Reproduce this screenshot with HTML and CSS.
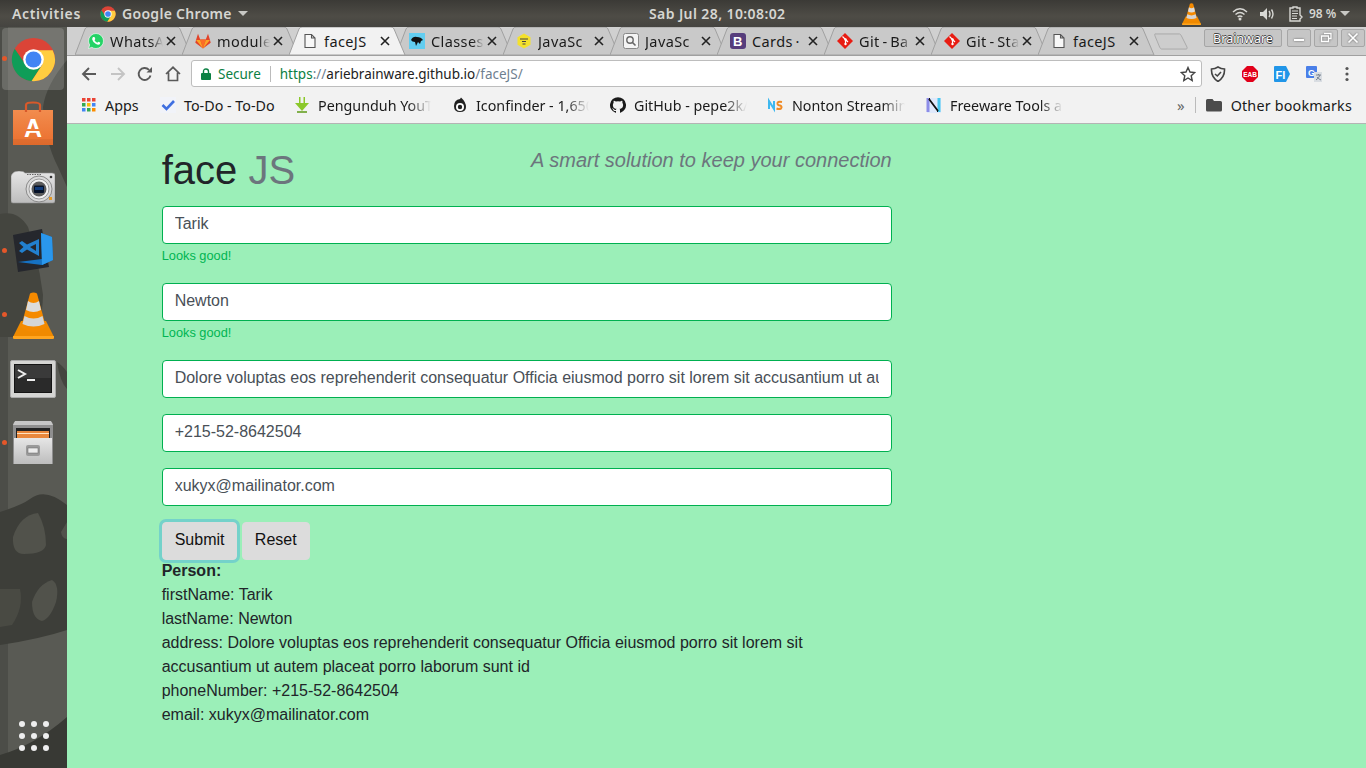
FILE: index.html
```html
<!DOCTYPE html>
<html lang="en">
<head>
<meta charset="utf-8">
<title>faceJS</title>
<link rel="stylesheet" href="styles.css">
</head>
<body>
<svg class="defs" width="0" height="0" aria-hidden="true">
  <defs>
    <symbol id="tabshape-in" viewBox="0 0 119 28"><path d="M0 28 L10 2 Q11 0 13 0 H102 Q104 0 105 2 L116 28 Z" fill="#c9c9c9" stroke="#a0a0a0"/></symbol>
    <symbol id="tabshape-on" viewBox="0 0 119 28"><path d="M0 28 L10 2 Q11 0 13 0 H102 Q104 0 105 2 L116 28 Z" fill="#f2f2f2" stroke="#a0a0a0"/></symbol>
    <symbol id="doc" viewBox="0 0 16 16"><path d="M3 1.500 H9.500 L13 5 V14.500 H3 Z M9.500 1.500 V5 H13" fill="#f8f8f8" stroke="#555" stroke-width="1.100"/></symbol>
    <symbol id="git" viewBox="0 0 16 16"><path d="M8 0 L16 8 L8 16 L0 8 Z" fill="#e81c12"/><path d="M5.500 3.500 L8.500 6.500 V11 M8.500 6.500 L11 9" stroke="#fff" stroke-width="1.200" fill="none"/><circle cx="8.500" cy="6.500" r="1.200" fill="#fff"/><circle cx="8.500" cy="11" r="1.200" fill="#fff"/></symbol>
    <symbol id="x" viewBox="0 0 10 10"><path d="M1 1 L9 9 M9 1 L1 9" stroke="#222" stroke-width="1.600"/></symbol>
    <linearGradient id="silver" x1="0" y1="0" x2="0" y2="1"><stop offset="0" stop-color="#e6e6e6"/><stop offset="1" stop-color="#bdbdbd"/></linearGradient>
    <linearGradient id="bag" x1="0" y1="0" x2="0" y2="1"><stop offset="0" stop-color="#f28c4e"/><stop offset="1" stop-color="#ea6f2e"/></linearGradient>
    <symbol id="cone" viewBox="0 0 41 47">
      <path d="M8 29 L0 45 Q0 47 2 47 H39 Q41 47 41 45 L33 29 Z" fill="#f08a00"/>
      <path d="M0 44 H41 V46 Q41 47 39 47 H2 Q0 47 0 46 Z" fill="#ffa51f"/>
      <path d="M17 1.500 Q20.500 -.5 24 1.500 L33 35 Q20.500 45 8 35 Z" fill="#f58a00"/>
      <path d="M15 9 Q20.500 13 26 9 L28 18 Q20.500 22 13 18 Z" fill="#dcdcdc"/>
      <path d="M11.500 24 Q20.500 29 29.500 24 L31.500 32 Q20.500 37 9.500 32 Z" fill="#d5d5d5"/>
    </symbol>
  </defs>
</svg>

<header class="topbar">
  <div class="top-left">
    <span class="activities">Activities</span>
    <svg class="top-chrome" viewBox="0 0 48 48"><circle cx="24" cy="24" r="23" fill="#db4437"/><path d="M4 12.500 A23 23 0 0 0 22 47 L33 30 H16 Z" fill="#0f9d58"/><path d="M24 14 H44.500 A23 23 0 0 1 22 47 L33 30 Z" fill="#ffcd40"/><circle cx="24" cy="24" r="11" fill="#fff"/><circle cx="24" cy="24" r="8.500" fill="#4285f4"/></svg>
    <span class="appname">Google Chrome</span>
    <span class="caret"></span>
  </div>
  <time class="clock">Sab Jul 28, 10:08:02</time>
  <div class="top-right">
    <svg class="tray-cone"><use href="#cone"/></svg>
    <svg class="tray-wifi" viewBox="0 0 16 14"><path d="M1 5 Q8 -1.500 15 5 M3.500 7.500 Q8 3.500 12.500 7.500 M5.700 9.800 Q8 8 10.300 9.800" stroke="#d8d8d4" stroke-width="1.500" fill="none"/><circle cx="8" cy="12" r="1.500" fill="#d8d8d4"/></svg>
    <svg class="tray-sound" viewBox="0 0 16 14"><path d="M1 5 H4 L8 1 V13 L4 9 H1 Z" fill="#d8d8d4"/><path d="M10 4 Q12 7 10 10 M12.500 2.500 Q15.500 7 12.500 11.500" stroke="#d8d8d4" stroke-width="1.400" fill="none"/></svg>
    <svg class="tray-batt" viewBox="0 0 14 16"><path d="M1 2 H4 V1 H8 V2 H11 V9 L13 11 L11 13 V15 H1 Z" fill="none" stroke="#d8d8d4" stroke-width="1.400"/><path d="M3 5 H9 M3 7.500 H9 M3 10 H8 M3 12.500 H8" stroke="#d8d8d4" stroke-width="1.100"/></svg>
    <span class="batt-text">98 %</span>
    <span class="caret"></span>
  </div>
</header>

<div class="desktop">
  <aside class="dock">
    <svg class="wallpaper" viewBox="0 0 67 741" preserveAspectRatio="none" aria-hidden="true">
      <rect width="67" height="741" fill="#595a54"/>
      <rect width="8" height="741" fill="#000" opacity=".14"/>
      <path d="M67 33 Q46 58 43 80 Q45 115 58 140 L67 160 Z" fill="#44453f"/>
      <path d="M0 187 Q18 183 28 200 Q38 230 43 268 Q42 300 33 310 L0 310 Z" fill="#44453f"/>
      <path d="M57 335 Q62 338 67 345 V362 Q60 355 57 335 Z" fill="#44453f"/>
      <path d="M0 485 Q22 478 30 472 Q45 460 67 478 V603 Q40 612 0 618 Z" fill="#3d3e39"/>
      <path d="M13 510 Q20 488 38 486 Q46 500 46 518 Q44 527 24 527 Q12 527 13 510 Z" fill="#51524b"/>
      <path d="M32 575 Q38 557 52 553 Q60 558 56 575 Q50 592 42 594 Q32 592 32 575 Z" fill="#51524b"/>
      <path d="M0 562 H20 Q24 580 12 598 L0 600 Z" fill="#494a43"/>
      <path d="M61 505 Q67 495 67 495 V512 Q62 512 61 505 Z" fill="#51524b"/>
      <path d="M0 741 V728 Q35 718 67 690 V741 Z" fill="#383934"/>
    </svg>
    <div class="dock-item dock-active"><span class="run-dot"></span>
      <svg class="ic-chrome" viewBox="0 0 48 48"><circle cx="24" cy="24" r="23" fill="#db4437"/><path d="M4 12.500 A23 23 0 0 0 22 47 L33 30 H16 Z" fill="#0f9d58"/><path d="M24 14 H44.500 A23 23 0 0 1 22 47 L33 30 Z" fill="#ffcd40"/><circle cx="24" cy="24" r="11" fill="#fff"/><circle cx="24" cy="24" r="8.500" fill="#4285f4"/></svg>
    </div>
    <div class="dock-item">
      <svg class="ic-store" viewBox="0 0 42 44"><path d="M1 9 H41 V44 H1 Z" fill="url(#bag)"/><path d="M14 11 V4 Q14 1.500 21 1.500 Q28 1.500 28 4 V11" fill="none" stroke="#d9592a" stroke-width="2.200"/><text x="21" y="36" class="store-a">A</text><rect x="12" y="28" width="18" height="2" fill="#ee7d3b"/><rect x="1" y="38" width="40" height="6" fill="#000" opacity=".05"/></svg>
    </div>
    <div class="dock-item">
      <svg class="ic-camera" viewBox="0 0 44 33"><path d="M1 3 Q3 0 8 0 Q13 0 14 2 H41 Q44 2 44 4 V30 Q44 32 42 32 H2 Q0 32 0 30 V5 Z" fill="url(#silver)" stroke="#8f8f8f" stroke-width=".6"/><path d="M16 3.500 H30" stroke="#666" stroke-dasharray="1.500 1"/><circle cx="28" cy="18" r="13" fill="#d9d9d9" stroke="#8a8a8a"/><circle cx="28" cy="18" r="10" fill="#f2f2f2" stroke="#9a9a9a"/><circle cx="28" cy="18" r="7.500" fill="#5a5a5a"/><rect x="23" y="14.500" width="10" height="7.500" rx="1" fill="#061228"/><rect x="24" y="16" width="8" height="3" fill="#103a78"/><rect x="38" y="26" width="3" height="3" fill="#e59a24"/><circle cx="40" cy="6" r="1.300" fill="#333"/></svg>
    </div>
    <div class="dock-item"><span class="run-dot"></span>
      <svg class="ic-code" viewBox="0 0 42 44"><path d="M1 6 L30 0 L37 38 L6 43 Z" fill="#25272d"/><path d="M29 4 L40 8 L41 31 L30 36 L6 33 L30 30 Z" fill="#1672c4"/><path d="M29 4 L40 8 L41 31 L30 36 Z" fill="#2a97ec"/><path d="M27 10 V27 L15 20.500 L10 24 L7 22 L11.500 18 L7 14 L10 12 L15 15.500 Z M24 15 L18 18 L24 22 Z" fill="#2280cf" fill-rule="evenodd"/></svg>
    </div>
    <div class="dock-item"><span class="run-dot"></span>
      <svg class="ic-cone"><use href="#cone"/></svg>
    </div>
    <div class="dock-item">
      <svg class="ic-term" viewBox="0 0 46 38"><rect x=".5" y=".5" width="45" height="37" rx="1.500" fill="#d5d5d3" stroke="#aaa"/><rect x="4" y="4" width="38" height="29" fill="#141414"/><rect x="5" y="5" width="36" height="13" fill="#3a3a3a"/><rect x="5" y="18" width="36" height="14" fill="#2a2a2a"/><path d="M8 10 L15 14 L8 18" stroke="#eee" stroke-width="2" fill="none"/><path d="M17 20 H25" stroke="#eee" stroke-width="2"/></svg>
    </div>
    <div class="dock-item"><span class="run-dot"></span>
      <svg class="ic-files" viewBox="0 0 42 44"><path d="M2 1 H40 L41 4 V43 H1 V4 Z" fill="#8f8f8f"/><path d="M3 0 H39 L41 4 H1 Z" fill="#c6c6c6"/><rect x="4" y="7" width="34" height="11" fill="#222"/><rect x="5" y="10" width="32" height="7" fill="#e8873c"/><path d="M5 12.500 H37" stroke="#ffe3c2"/><path d="M2 17 H40 V43 H2 Z" fill="url(#silver)"/><rect x="14" y="24" width="14" height="11" rx="2" fill="#9a9a9a"/><rect x="16" y="27" width="10" height="5" fill="#ececec" stroke="#666" stroke-width=".5"/></svg>
    </div>
    <div class="dock-grid">
      <i></i><i></i><i></i><i></i><i></i><i></i><i></i><i></i><i></i>
    </div>
  </aside>

  <div class="browser">
    <div class="tabstrip">
      <div class="tab">
        <svg class="tab-bg"><use href="#tabshape-in"/></svg>
        <svg class="fav" viewBox="0 0 16 16"><path d="M8 .5 A7.500 7.500 0 0 1 8 15.500 Q5.500 15.500 3.800 14.300 L.5 15.500 L1.700 12 Q.5 10 .5 8 A7.500 7.500 0 0 1 8 .5 Z" fill="#25d366" stroke="#fff" stroke-width=".6"/><path d="M5 4 L6.500 4 L7.300 6 L6.500 7.200 Q7.500 9 9.300 9.700 L10.300 8.700 L12.200 9.600 L12 11 Q10.500 12.300 8 11 Q5 9.500 4.200 6.500 Q4 5 5 4 Z" fill="#fff"/></svg>
        <span class="tab-label">WhatsA</span>
        <svg class="tab-x"><use href="#x"/></svg>
      </div>
      <div class="tab">
        <svg class="tab-bg"><use href="#tabshape-in"/></svg>
        <svg class="fav" viewBox="0 0 16 16"><path d="M8 15.500 L.3 9.800 L1 7 L3 .8 L5.200 6.500 H10.800 L13 .8 L15 7 L15.700 9.800 Z" fill="#e24329"/><path d="M8 15.500 L5.200 6.500 H10.800 Z" fill="#fc6d26"/><path d="M8 15.500 L1 7 H5.200 Z M8 15.500 L15 7 H10.800 Z" fill="#fca326"/></svg>
        <span class="tab-label">module</span>
        <svg class="tab-x"><use href="#x"/></svg>
      </div>
      <div class="tab tab-active">
        <svg class="tab-bg"><use href="#tabshape-on"/></svg>
        <svg class="fav"><use href="#doc"/></svg>
        <span class="tab-label tab-label-full">faceJS</span>
        <svg class="tab-x"><use href="#x"/></svg>
      </div>
      <div class="tab">
        <svg class="tab-bg"><use href="#tabshape-in"/></svg>
        <svg class="fav" viewBox="0 0 16 16"><rect width="16" height="16" fill="#62cdf0"/><path d="M2 7 Q4 3 8 4 Q12 4 14 7 L12 8 L11 11 L9 9 L7 13 L6 9 Q3 9 2 7 Z" fill="#111"/></svg>
        <span class="tab-label">Classes</span>
        <svg class="tab-x"><use href="#x"/></svg>
      </div>
      <div class="tab">
        <svg class="tab-bg"><use href="#tabshape-in"/></svg>
        <svg class="fav" viewBox="0 0 16 16"><path d="M8 .5 L14.500 4.200 V11.800 L8 15.500 L1.500 11.800 V4.200 Z" fill="#f4e12c"/><path d="M4 6 H12 M6 8.500 H10 M6.500 11 H9.500" stroke="#444" stroke-width="1.200"/></svg>
        <span class="tab-label">JavaSc</span>
        <svg class="tab-x"><use href="#x"/></svg>
      </div>
      <div class="tab">
        <svg class="tab-bg"><use href="#tabshape-in"/></svg>
        <svg class="fav" viewBox="0 0 16 16"><rect x=".5" y=".5" width="15" height="15" rx="2" fill="#f4f4f4" stroke="#888"/><circle cx="7" cy="7" r="3.200" fill="none" stroke="#666" stroke-width="1.400"/><path d="M9.500 9.500 L12.500 12.500" stroke="#666" stroke-width="1.600"/></svg>
        <span class="tab-label">JavaSc</span>
        <svg class="tab-x"><use href="#x"/></svg>
      </div>
      <div class="tab">
        <svg class="tab-bg"><use href="#tabshape-in"/></svg>
        <svg class="fav" viewBox="0 0 16 16"><rect width="16" height="16" rx="3" fill="#563d7c"/><text x="8" y="13" class="fav-b">B</text></svg>
        <span class="tab-label tab-label-full">Cards ·</span>
        <svg class="tab-x"><use href="#x"/></svg>
      </div>
      <div class="tab">
        <svg class="tab-bg"><use href="#tabshape-in"/></svg>
        <svg class="fav"><use href="#git"/></svg>
        <span class="tab-label">Git - Ba</span>
        <svg class="tab-x"><use href="#x"/></svg>
      </div>
      <div class="tab">
        <svg class="tab-bg"><use href="#tabshape-in"/></svg>
        <svg class="fav"><use href="#git"/></svg>
        <span class="tab-label">Git - Sta</span>
        <svg class="tab-x"><use href="#x"/></svg>
      </div>
      <div class="tab">
        <svg class="tab-bg"><use href="#tabshape-in"/></svg>
        <svg class="fav"><use href="#doc"/></svg>
        <span class="tab-label tab-label-full">faceJS</span>
        <svg class="tab-x"><use href="#x"/></svg>
      </div>
      <svg class="newtab" viewBox="0 0 36 18"><path d="M1 1 H27 Q28 1 29 3 L35 15 Q35.500 17 34 17 H8 Q7 17 6 15 L1 3 Q.5 1 1 1 Z" fill="#cdcdcd" stroke="#a8a8a8"/></svg>
      <div class="winctl">
        <span class="win-name">Brainware</span>
        <span class="win-btn"><svg viewBox="0 0 12 12"><path d="M1 8 H11" stroke="#fff" stroke-width="2"/></svg></span>
        <span class="win-btn"><svg viewBox="0 0 12 12"><path d="M4 1.500 H11 V6.500 H9 M1.500 4 H8.500 V9.500 H1.500 Z" fill="none" stroke="#fff" stroke-width="1.300"/></svg></span>
        <span class="win-btn win-close"><svg viewBox="0 0 12 12"><path d="M1.500 1.500 L10.500 10.500 M10.500 1.500 L1.500 10.500" stroke="#fff" stroke-width="1.700"/></svg></span>
      </div>
    </div>

    <div class="toolbar">
      <svg class="tb tb-back" viewBox="0 0 16 16"><path d="M15 8 H2.500 M8 2 L2 8 L8 14" stroke="#5a5a5a" stroke-width="1.900" fill="none"/></svg>
      <svg class="tb tb-fwd" viewBox="0 0 16 16"><path d="M1 8 H13.500 M8 2 L14 8 L8 14" stroke="#c4c4c4" stroke-width="1.900" fill="none"/></svg>
      <svg class="tb tb-reload" viewBox="0 0 16 16"><path d="M13.500 9.500 A6 6 0 1 1 12 3.800" stroke="#5a5a5a" stroke-width="1.900" fill="none"/><path d="M9.500 6.500 H15 V1 Z" fill="#5a5a5a"/></svg>
      <svg class="tb tb-home" viewBox="0 0 16 16"><path d="M1 8 L8 1.300 L15 8 M3.500 6.500 V14.500 H12.500 V6.500" stroke="#5a5a5a" stroke-width="1.700" fill="none"/></svg>
      <div class="omnibox">
        <svg class="lock" viewBox="0 0 10 12"><path d="M2.500 5 V3.500 Q2.500 1 5 1 Q7.500 1 7.500 3.500 V5" fill="none" stroke="#0b8043" stroke-width="1.400"/><rect y="5" width="10" height="7" rx="1" fill="#0b8043"/></svg>
        <span class="secure">Secure</span>
        <span class="omni-sep"></span>
        <span class="url"><span class="url-https">https</span><span class="url-mute">://</span>ariebrainware.github.io<span class="url-mute">/faceJS/</span></span>
        <svg class="star" viewBox="0 0 16 16"><path d="M8 1.500 L10 6 L14.800 6.500 L11.200 9.700 L12.200 14.500 L8 12 L3.800 14.500 L4.800 9.700 L1.200 6.500 L6 6 Z" fill="none" stroke="#444" stroke-width="1.400"/></svg>
      </div>
      <div class="exts">
        <svg viewBox="0 0 16 16"><path d="M8 1 Q11 3 14.500 3 Q15 11 8 15.500 Q1 11 1.500 3 Q5 3 8 1 Z" fill="none" stroke="#444" stroke-width="1.600"/><path d="M5 8 L7.300 10 L11 6" stroke="#444" stroke-width="1.600" fill="none"/></svg>
        <svg viewBox="0 0 16 16"><path d="M5 0 H11 L16 5 V11 L11 16 H5 L0 11 V5 Z" fill="#e2001a"/><text x="8" y="10.500" class="ext-eab">EAB</text></svg>
        <svg viewBox="0 0 16 16"><path d="M1 0 H12 L16 8 L12 16 H1 Q0 16 0 15 V1 Q0 0 1 0 Z" fill="#2196e8"/><text x="6.500" y="12.500" class="ext-fi">FI</text></svg>
        <svg viewBox="0 0 16 16"><rect width="11" height="12" rx="1" fill="#4a7fe8"/><text x="5.500" y="9.500" class="ext-g">G</text><path d="M8 6 H16 V16 H8 Z" fill="#d9dde2"/><path d="M10 9 H15 M12.500 8 V9 M14 9 Q13 12 10 14 M11 11 Q12.500 13 15 14" stroke="#7a8492" stroke-width="1" fill="none"/></svg>
        <svg class="ext-menu" viewBox="0 0 4 16"><circle cx="2" cy="2.500" r="1.600" fill="#555"/><circle cx="2" cy="8" r="1.600" fill="#555"/><circle cx="2" cy="13.500" r="1.600" fill="#555"/></svg>
      </div>
    </div>

    <nav class="bookmarks">
      <div class="bm bm-apps">
        <svg class="bm-ic" viewBox="0 0 14 14"><rect width="3.500" height="3.500" fill="#ea4335"/><rect x="5" width="3.500" height="3.500" fill="#ea4335"/><rect x="10" width="3.500" height="3.500" fill="#ea4335"/><rect y="5" width="3.500" height="3.500" fill="#34a853"/><rect x="5" y="5" width="3.500" height="3.500" fill="#fbbc05"/><rect x="10" y="5" width="3.500" height="3.500" fill="#4285f4"/><rect y="10" width="3.500" height="3.500" fill="#4285f4"/><rect x="5" y="10" width="3.500" height="3.500" fill="#34a853"/><rect x="10" y="10" width="3.500" height="3.500" fill="#fb8c00"/></svg>
        <span>Apps</span>
      </div>
      <div class="bm bm-todo">
        <svg class="bm-ic" viewBox="0 0 16 16"><rect width="16" height="16" fill="#f1f3f9"/><path d="M2.500 8 L6.500 12 L14 4" stroke="#3f6fe0" stroke-width="2.600" fill="none"/></svg>
        <span>To-Do - To-Do</span>
      </div>
      <div class="bm bm-fixed">
        <svg class="bm-ic" viewBox="0 0 16 16"><path d="M5 0 H6.500 V6 H9.500 V0 H11 V6 H15 L8 14 L1 6 H5 Z" fill="#8bc82a"/><path d="M3 15 H13" stroke="#5d9a14" stroke-width="1.500"/></svg>
        <span class="bm-fade">Pengunduh YouT</span>
      </div>
      <div class="bm bm-fixed">
        <svg class="bm-ic" viewBox="0 0 16 16"><path d="M2 9 Q2 3 8 2 L9 0.500 Q14 5 14 10 Q14 15 8 15 Q2 15 2 9 Z" fill="#222"/><circle cx="8" cy="10" r="4" fill="#fff"/><circle cx="8" cy="10" r="2.200" fill="#222"/></svg>
        <span class="bm-fade">Iconfinder - 1,650</span>
      </div>
      <div class="bm bm-fixed">
        <svg class="bm-ic" viewBox="0 0 16 16"><path d="M8 .2 A8 8 0 0 0 5.500 15.800 C5.900 15.900 6 15.600 6 15.400 V14 C3.800 14.500 3.300 13 3.300 13 C3 12.100 2.400 11.800 2.400 11.800 C1.700 11.300 2.500 11.300 2.500 11.300 C3.300 11.400 3.700 12.100 3.700 12.100 C4.400 13.300 5.600 13 6 12.800 C6.100 12.300 6.300 12 6.500 11.800 C4.700 11.600 2.900 10.900 2.900 7.900 C2.900 7 3.200 6.300 3.700 5.800 C3.600 5.600 3.300 4.800 3.800 3.700 C3.800 3.700 4.500 3.500 6 4.500 A7.500 7.500 0 0 1 10 4.500 C11.500 3.500 12.200 3.700 12.200 3.700 C12.700 4.800 12.400 5.600 12.300 5.800 C12.800 6.300 13.100 7 13.100 7.900 C13.100 10.900 11.300 11.600 9.500 11.800 C9.800 12 10 12.500 10 13.200 V15.400 C10 15.600 10.100 15.900 10.500 15.800 A8 8 0 0 0 8 .2 Z" fill="#1b1b1b"/></svg>
        <span class="bm-fade">GitHub - pepe2k/</span>
      </div>
      <div class="bm bm-fixed">
        <svg class="bm-ic" viewBox="0 0 16 16"><path d="M1 12 V4 L6 12 V4" stroke="#3fb8ef" stroke-width="2" fill="none"/><path d="M14 5 Q9 4 9.500 7 Q10 8.500 12 8.500 Q14.500 9.500 13 11.500 Q11 12.500 8.500 11.500" stroke="#f08a24" stroke-width="2" fill="none"/></svg>
        <span class="bm-fade">Nonton Streamin</span>
      </div>
      <div class="bm bm-fixed">
        <svg class="bm-ic" viewBox="0 0 16 16"><rect x="1" y="1" width="14" height="15" fill="#dfe9fb"/><path d="M2 1 V15" stroke="#8d8de8" stroke-width="3"/><path d="M13 1 V15" stroke="#46c7ee" stroke-width="3"/><path d="M3 2 L12 14 M3 2 H4 M11 14 H12" stroke="#111" stroke-width="1.800"/></svg>
        <span class="bm-fade">Freeware Tools a</span>
      </div>
      <span class="bm-more">»</span>
      <span class="bm-sep"></span>
      <div class="bm bm-other">
        <svg class="bm-ic" viewBox="0 0 16 14"><path d="M1.500 1 H6.500 L8 3 H14.500 Q16 3 16 4.500 V12 Q16 13.500 14.500 13.500 H1.500 Q0 13.500 0 12 V2.500 Q0 1 1.500 1 Z" fill="#4c4c4c"/></svg>
        <span>Other bookmarks</span>
      </div>
    </nav>

    <main class="page">
      <div class="sheet">
        <div class="heading">
          <h1 class="brand">face <span class="brand-muted">JS</span></h1>
          <p class="tagline">A smart solution to keep your connection</p>
        </div>
        <form class="form">
          <div class="field field-checked">
            <input class="control" type="text" value="Tarik">
            <div class="valid">Looks good!</div>
          </div>
          <div class="field field-checked">
            <input class="control" type="text" value="Newton">
            <div class="valid">Looks good!</div>
          </div>
          <div class="field">
            <input class="control" type="text" value="Dolore voluptas eos reprehenderit consequatur Officia eiusmod porro sit lorem sit accusantium ut autem placeat porro laborum sunt id">
          </div>
          <div class="field">
            <input class="control" type="text" value="+215-52-8642504">
          </div>
          <div class="field">
            <input class="control" type="text" value="xukyx@mailinator.com">
          </div>
          <div class="buttons">
            <button class="btn btn-focus" type="button">Submit</button>
            <button class="btn" type="button">Reset</button>
          </div>
        </form>
        <div class="result">
          <strong>Person:</strong><br>
          firstName: Tarik<br>
          lastName: Newton<br>
          address: Dolore voluptas eos reprehenderit consequatur Officia eiusmod porro sit lorem sit accusantium ut autem placeat porro laborum sunt id<br>
          phoneNumber: +215-52-8642504<br>
          email: xukyx@mailinator.com
        </div>
      </div>
    </main>
  </div>
</div>
</body>
</html>
```
FILE: styles.css
```css
* { box-sizing: border-box; }
html, body { margin: 0; height: 100%; }
body {
  width: 1366px;
  height: 768px;
  overflow: hidden;
  display: flex;
  flex-direction: column;
  font-family: "Noto Sans", sans-serif;
  background: #3c3b37;
}
.defs { position: absolute; }

/* top panel */
.topbar {
  height: 27px;
  flex: none;
  display: flex;
  align-items: center;
  background: linear-gradient(#3b3a36, #4e4c46 60%, #454440);
  color: #d6d6d2;
  font-size: 14px;
  font-weight: 600;
  letter-spacing: .3px;
}
.top-left { width: 649px; flex: none; display: flex; align-items: center; padding-left: 12px; }
.activities { width: 88px; letter-spacing: .65px; }
.top-chrome { width: 16px; height: 16px; margin-right: 6px; }
.appname { margin-right: 6px; }
.caret { width: 0; height: 0; flex: none; border-left: 5px solid transparent; border-right: 5px solid transparent; border-top: 5px solid #c8c8c4; }
.clock { letter-spacing: .4px; }
.top-right { margin-left: auto; display: flex; align-items: center; padding-right: 16px; }
.tray-cone { width: 19px; height: 22px; margin-right: 31px; }
.tray-wifi { width: 16px; height: 14px; margin-right: 11px; }
.tray-sound { width: 16px; height: 14px; margin-right: 14px; }
.tray-batt { width: 14px; height: 16px; margin-right: 6px; }
.batt-text { width: 27px; font-size: 12px; letter-spacing: 0; margin-right: 4px; white-space: nowrap; }

.desktop { flex: 1; min-height: 0; display: flex; }

/* launcher */
.dock {
  width: 67px;
  flex: none;
  position: relative;
  display: flex;
  flex-direction: column;
  align-items: flex-start;
  padding: 1px 0 0 2px;
  overflow: hidden;
}
.wallpaper { position: absolute; inset: 0; width: 100%; height: 100%; }
.dock-item {
  position: relative;
  width: 62px;
  height: 64px;
  flex: none;
  display: flex;
  align-items: center;
  justify-content: center;
}
.dock-active { background: rgba(255,255,255,.17); border-radius: 4px; height: 62px; margin-bottom: 1px; }
.run-dot {
  position: absolute;
  left: 0;
  top: 50%;
  margin-top: -3px;
  width: 5px;
  height: 5px;
  border-radius: 50%;
  background: #e4572a;
}
.ic-chrome { width: 45px; height: 45px; }
.ic-store { width: 42px; height: 44px; }
.ic-camera { width: 44px; height: 33px; }
.ic-code { width: 42px; height: 44px; }
.ic-cone { width: 41px; height: 47px; }
.ic-term { width: 46px; height: 38px; }
.ic-files { width: 42px; height: 44px; }
.store-a { font: 700 25px "Liberation Sans", sans-serif; fill: #fff; text-anchor: middle; }
.dock-grid {
  position: relative;
  align-self: center;
  margin-top: auto;
  margin-bottom: 17px;
  margin-left: -2px;
  display: grid;
  grid-template-columns: repeat(3, 6px);
  gap: 6px;
}
.dock-grid i { width: 6px; height: 6px; border-radius: 50%; background: #eee; }

/* browser */
.browser { flex: 1; min-width: 0; display: flex; flex-direction: column; }
.tabstrip {
  height: 29px;
  flex: none;
  display: flex;
  padding-left: 8px;
  background: #d0d0d0;
  border-bottom: 1px solid #a0a0a0;
  position: relative;
}
.tab {
  position: relative;
  width: 119px;
  height: 28px;
  margin-right: -12px;
  flex: none;
  display: flex;
  align-items: center;
  padding-left: 13px;
  font-size: 14.5px;
  letter-spacing: .4px;
  word-spacing: -1.5px;
  color: #1a1a1a;
}
.tab-active { z-index: 2; }
.tab-bg { position: absolute; inset: 0; width: 119px; height: 28px; overflow: visible; }
.fav { position: relative; width: 16px; height: 16px; flex: none; margin-right: 6px; }
.fav-b { font: 700 13px "Liberation Sans", sans-serif; fill: #fff; text-anchor: middle; }
.tab-label {
  position: relative;
  width: 53px;
  white-space: nowrap;
  overflow: hidden;
  -webkit-mask-image: linear-gradient(90deg, #000 78%, transparent);
  mask-image: linear-gradient(90deg, #000 78%, transparent);
}
.tab-label-full { -webkit-mask-image: none; mask-image: none; }
.tab-x { position: relative; width: 10px; height: 10px; margin-left: 3px; flex: none; }
.newtab { width: 36px; height: 17px; margin: 6px 0 0 8px; flex: none; }
.winctl { display: flex; align-items: flex-start; margin-left: auto; padding-top: 2px; gap: 3px; }
.win-name, .win-btn {
  height: 18px;
  display: flex;
  align-items: center;
  justify-content: center;
  background: #c6c6c6;
  border: 1px solid #a6a6a6;
  border-radius: 2px;
  color: #fff;
}
.win-name {
  width: 78px;
  margin-right: 2px;
  font-size: 12.5px;
  text-shadow: .6px 0 #444, -.6px 0 #444, 0 .6px #444, 0 -.6px #444;
}
.win-btn { width: 24px; }
.win-btn svg { width: 12px; height: 12px; filter: drop-shadow(0 0 1px #666); }
.win-close { margin-right: 1px; }

.toolbar {
  height: 35px;
  flex: none;
  display: flex;
  align-items: center;
  background: #f2f2f2;
  padding-left: 14px;
}
.tb { width: 16px; height: 16px; flex: none; margin-top: 1px; }
.tb-back { margin-right: 13px; }
.tb-fwd { margin-right: 11px; }
.tb-reload { margin-right: 12px; }
.tb-home { margin-right: 10px; }
.omnibox {
  width: 1011px;
  height: 27px;
  flex: none;
  display: flex;
  align-items: center;
  background: #fff;
  border: 1px solid #bdbdbd;
  border-radius: 3px;
  padding-left: 9px;
  font-size: 13.5px;
}
.lock { width: 10px; height: 12px; flex: none; margin-right: 7px; }
.secure { color: #0b8043; }
.omni-sep { width: 1px; height: 16px; background: #bbb; margin: 0 9px; }
.url { color: #222; white-space: nowrap; }
.url-https { color: #0b8043; }
.url-mute { color: #6f7f8f; }
.star { width: 16px; height: 16px; margin-left: auto; margin-right: 5px; flex: none; }
.exts { display: flex; align-items: center; padding-left: 8px; gap: 16px; }
.exts svg { width: 16px; height: 16px; flex: none; }
.exts .ext-menu { width: 4px; margin-left: 7px; }
.ext-eab { font: 700 6.5px "Liberation Sans", sans-serif; fill: #fff; text-anchor: middle; }
.ext-fi { font: 700 11px "Liberation Sans", sans-serif; fill: #fff; text-anchor: middle; }
.ext-g { font: 700 9px "Liberation Sans", sans-serif; fill: #fff; text-anchor: middle; }

.bookmarks {
  height: 33px;
  flex: none;
  display: flex;
  align-items: center;
  background: #f2f2f2;
  border-bottom: 1px solid #b4b4b4;
  padding: 0 0 4px 15px;
  font-size: 14.3px;
  color: #1a1a1a;
}
.bm { display: flex; align-items: center; flex: none; white-space: nowrap; }
.bm-ic { width: 16px; height: 16px; flex: none; }
.bm-apps { width: 78px; }
.bm-apps .bm-ic { width: 14px; height: 14px; margin-right: 9px; }
.bm-todo { width: 134px; }
.bm-todo .bm-ic { margin-right: 8px; }
.bm-fixed { width: 158px; }
.bm-fixed .bm-ic { margin-right: 8px; }
.bm-fade {
  width: 113px;
  overflow: hidden;
  -webkit-mask-image: linear-gradient(90deg, #000 80%, transparent);
  mask-image: linear-gradient(90deg, #000 80%, transparent);
}
.bm-more { margin-left: auto; color: #666; font-size: 15px; }
.bm-sep { width: 1px; height: 16px; background: #bbb; margin: 0 10px; }
.bm-other { padding-right: 14px; letter-spacing: .2px; }
.bm-other .bm-ic { margin-right: 9px; }

/* page */
.page {
  flex: 1;
  min-height: 0;
  background: #9befb8;
  padding: 22px 0 0 94.67px;
  font-family: "Liberation Sans", sans-serif;
  font-size: 16px;
  line-height: 24px;
  color: #212529;
}
.sheet { width: 730px; }
.heading { display: flex; justify-content: space-between; align-items: flex-start; margin-bottom: 12px; }
.brand { margin: 0; font-size: 40px; font-weight: 400; line-height: 48px; }
.brand-muted { color: #6c757d; }
.tagline { margin: 0; font-size: 20px; font-style: italic; line-height: 28px; color: #6c757d; }
.field { margin-bottom: 16px; }
.field-checked { margin-bottom: 18px; }
.control {
  display: block;
  width: 100%;
  height: 38px;
  padding: 5px 12px 7px;
  font: 16px/24px "Liberation Sans", sans-serif;
  color: #495057;
  background: #fff;
  border: 1px solid #00b050;
  border-radius: 4px;
  outline: none;
}
.valid { margin-top: 2px; font-size: 12.8px; line-height: 19.2px; color: #00b553; }
.buttons { display: flex; gap: 4.4px; }
.btn {
  height: 38px;
  padding: 5px 12px 7px;
  font: 16px/24px "Liberation Sans", sans-serif;
  color: #111;
  background: #dcdcdc;
  border: 1px solid #dcdcdc;
  border-radius: 4px;
}
.btn-focus { box-shadow: 0 0 0 3px rgba(0,123,255,.25); }
.result { width: 700px; margin-top: -1px; }
```
